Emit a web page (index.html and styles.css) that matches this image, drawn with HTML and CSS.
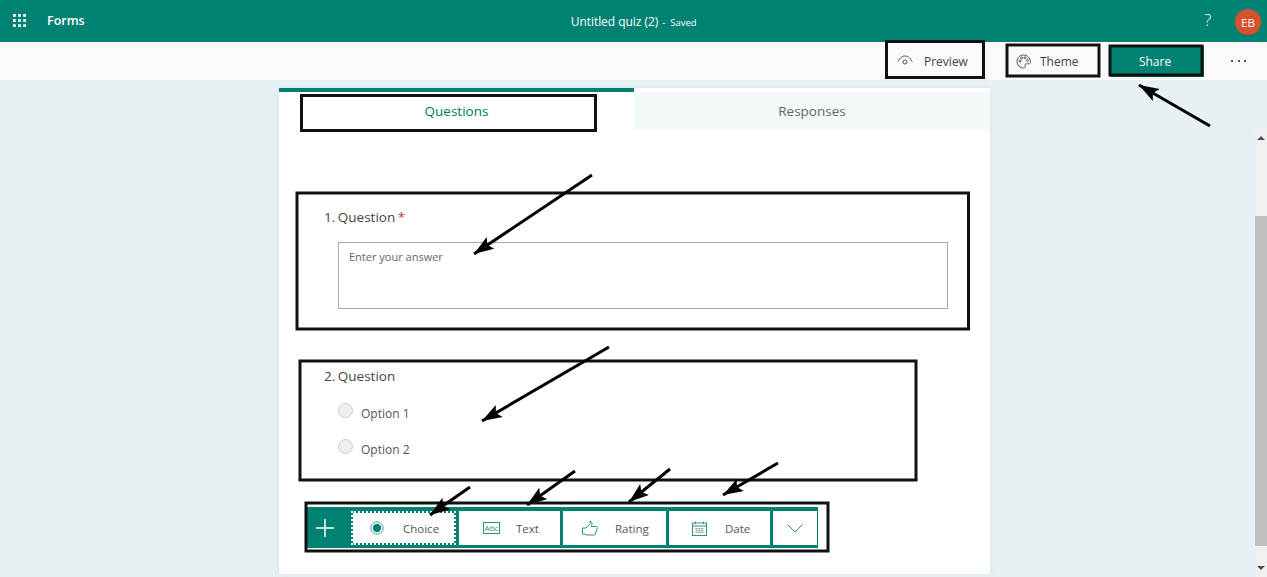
FILE: index.html
```html
<!DOCTYPE html>
<html lang="en">
<head>
  <meta charset="UTF-8" />
  <title>Untitled quiz (2) - Forms</title>
  <link rel="stylesheet" href="styles.css">
</head>
<body>
  <header class="topbar">
    <svg class="waffle" width="13" height="13" viewBox="0 0 14 14">
      <g fill="#fff">
        <rect x="0" y="0" width="3" height="3"/><rect x="5.500" y="0" width="3" height="3"/><rect x="11" y="0" width="3" height="3"/>
        <rect x="0" y="5.500" width="3" height="3"/><rect x="5.500" y="5.500" width="3" height="3"/><rect x="11" y="5.500" width="3" height="3"/>
        <rect x="0" y="11" width="3" height="3"/><rect x="5.500" y="11" width="3" height="3"/><rect x="11" y="11" width="3" height="3"/>
      </g>
    </svg>
    <span class="brand">Forms</span>
    <div class="doc-title">Untitled quiz (2)<span class="dash">-</span><span class="saved">Saved</span></div>
    <span class="help">?</span>
    <span class="avatar">EB</span>
  </header>

  <div class="actions">
    <button class="action preview">
      <svg width="16" height="12" viewBox="0 0 16 12" fill="none" stroke="#555" stroke-width="1">
        <path d="M1 6.500C3 2.500 5.500 1 8 1s5 1.500 7 5.500"/>
        <circle cx="8" cy="7" r="2"/>
      </svg>
      <span>Preview</span>
    </button>
    <button class="action theme">
      <svg width="15" height="15" viewBox="0 0 15 15" fill="none" stroke="#555" stroke-width="1">
        <path d="M7.500 1C3.500 1 1 3.800 1 7.300 1 11 4 14 7.500 14c1.500 0 2-1 1.600-2-.5-1.200.2-2.200 1.500-2.200h2.200c1 0 1.700-.8 1.700-2C14 3.800 11.500 1 7.500 1z"/>
        <circle cx="4" cy="7" r="1"/><circle cx="5.500" cy="4" r="1"/><circle cx="9" cy="3.800" r="1"/><circle cx="11.500" cy="6.500" r="1"/>
      </svg>
      <span>Theme</span>
    </button>
    <button class="share">Share</button>
    <span class="more">
      <i></i><i></i><i></i>
    </span>
  </div>

  <main class="content">
    <section class="card">
      <nav class="tabs">
        <div class="tab tab-active">Questions</div>
        <div class="tab">Responses</div>
      </nav>

      <div class="question q-text">
        <div class="q-title">1. Question <span class="req">*</span></div>
        <div class="answer">Enter your answer</div>
      </div>

      <div class="question q-choice">
        <div class="q-title">2. Question</div>
        <div class="option"><span class="radio"></span><span>Option 1</span></div>
        <div class="option"><span class="radio"></span><span>Option 2</span></div>
      </div>

      <div class="add-bar">
        <span class="plus">
          <svg width="18" height="18" viewBox="0 0 18 18" stroke="#fff" stroke-width="1.500"><path d="M9 0v18M0 9h18"/></svg>
        </span>
        <button class="add-btn add-choice">
          <svg width="14" height="14" viewBox="0 0 14 14">
            <circle cx="7" cy="7" r="6.200" fill="none" stroke="#5a9f97" stroke-width="1"/>
            <circle cx="7" cy="7" r="4.200" fill="#008272"/>
          </svg>
          <span>Choice</span>
        </button>
        <button class="add-btn add-text">
          <svg width="17" height="12" viewBox="0 0 17 12">
            <rect x=".5" y=".5" width="16" height="11" fill="none" stroke="#2e8f84"/>
            <text x="8.500" y="8.500" class="abc">Abc</text>
          </svg>
          <span>Text</span>
        </button>
        <button class="add-btn add-rating">
          <svg width="16" height="15" viewBox="0 0 16 15" fill="none" stroke="#2e8f84" stroke-width="1">
            <path d="M.5 7h3.500l4-4.500V.5c1.500 0 2 1 2 2.200L9.500 5.500h5c.8 0 1.200 1 .8 1.700l-2 5.800c-.2.600-.6 1-1.300 1H4l-1-1H.5z"/>
          </svg>
          <span>Rating</span>
        </button>
        <button class="add-btn add-date">
          <svg width="15" height="15" viewBox="0 0 15 15" fill="none" stroke="#2e8f84" stroke-width="1">
            <rect x=".5" y="2" width="14" height="12.500"/>
            <path d="M.5 5h14M3.500 .5V3M11.500 .5V3"/>
            <path d="M3 7.500h9M3 9.500h9M3 11.500h9M5 7v5M7.500 7v5M10 7v5" stroke="#8a9" stroke-width=".7"/>
          </svg>
          <span>Date</span>
        </button>
        <button class="add-more">
          <svg width="16" height="9" viewBox="0 0 16 9" fill="none" stroke="#2e8f84" stroke-width="1"><path d="M.5 .5L8 8l7.500-7.500"/></svg>
        </button>
      </div>
    </section>

    <aside class="scrollbar">
      <span class="arrow-up"></span>
      <span class="thumb"></span>
      <span class="arrow-down"></span>
    </aside>
  </main>

  <!-- black boxes and arrows drawn over the screenshot -->
  <svg class="marks" width="1267" height="577" viewBox="0 0 1267 577">
    <defs>
      <marker id="head" markerUnits="userSpaceOnUse" markerWidth="22" markerHeight="16" refX="20" refY="7" orient="auto">
        <path d="M0 0L20 7L0 14L4 7z" fill="#000"/>
      </marker>
    </defs>
    <g fill="none" stroke="#111" stroke-width="3">
      <rect x="886.500" y="41.500" width="97" height="36"/>
      <rect x="1007" y="45" width="92" height="31"/>
      <rect x="1110" y="46" width="92" height="29"/>
      <rect x="301.500" y="95.500" width="294" height="35"/>
      <rect x="297" y="193" width="671.500" height="136"/>
      <rect x="300" y="361" width="616" height="119"/>
      <rect x="306" y="503" width="522" height="48"/>
    </g>
    <g stroke="#000" stroke-width="3">
      <line x1="1210" y1="126" x2="1139" y2="85" marker-end="url(#head)"/>
      <line x1="592" y1="175" x2="474" y2="254" marker-end="url(#head)"/>
      <line x1="609" y1="347" x2="482" y2="421" marker-end="url(#head)"/>
      <line x1="470" y1="487" x2="430" y2="515" marker-end="url(#head)"/>
      <line x1="575" y1="471" x2="527" y2="505" marker-end="url(#head)"/>
      <line x1="670" y1="469" x2="629" y2="502" marker-end="url(#head)"/>
      <line x1="778" y1="463" x2="723" y2="495" marker-end="url(#head)"/>
    </g>
  </svg>
</body>
</html>
```

FILE: styles.css
```css
* {
  box-sizing: border-box;
}
html, body {
  height: 100%;
}
body {
  margin: 0;
  position: relative;
  overflow: hidden;
  background-color: #e7f0f3;
  color: #333;
  font-family: "Open Sans", "Noto Sans", sans-serif;
  font-size: 13px;
  display: flex;
  flex-direction: column;
}
button {
  font: inherit;
  border: 0;
  background: none;
  padding: 0;
  color: inherit;
}

/* top bar */
.topbar {
  height: 42px;
  flex: none;
  background-color: #008272;
  color: #fff;
  display: flex;
  align-items: center;
  padding-left: 13px;
}
.waffle {
  margin-top: -2px;
}
.brand {
  margin-left: 21px;
  margin-top: -2px;
  font-size: 12.500px;
  font-weight: 600;
}
.doc-title {
  margin-left: 486px;
  font-size: 12px;
  letter-spacing: -.05px;
}
.dash {
  margin: 0 5px 0 4px;
  font-size: 10px;
}
.saved {
  font-size: 9.500px;
}
.help {
  margin-left: 508px;
  margin-top: -3px;
  font-size: 16px;
  font-weight: 300;
}
.avatar {
  width: 26px;
  height: 26px;
  margin-left: auto;
  margin-right: 6px;
  margin-top: 2px;
  border-radius: 50%;
  background-color: #d9512c;
  font-size: 11.500px;
  display: flex;
  align-items: center;
  justify-content: center;
}

/* action row */
.actions {
  height: 38px;
  flex: none;
  background-color: #fafafa;
  display: flex;
  align-items: center;
  justify-content: flex-end;
  padding-right: 21px;
  font-size: 12px;
  color: #444;
}
.action {
  display: flex;
  align-items: center;
  height: 32px;
}
.preview {
  width: 98px;
  padding-left: 10px;
  gap: 11px;
}
.theme {
  width: 94px;
  margin-left: 22px;
  padding-left: 9px;
  gap: 9px;
}
.share {
  width: 94px;
  height: 31px;
  margin-left: 9px;
  padding-right: 4px;
  background-color: #008272;
  color: #fff;
}
.more {
  margin-left: 27px;
  width: 15px;
  display: flex;
  justify-content: space-between;
}
.more i {
  width: 2px;
  height: 2px;
  background-color: #555;
}

/* page body */
.content {
  flex: 1;
  display: flex;
  min-height: 0;
}
.card {
  width: 711px;
  height: 486px;
  margin-left: 279px;
  margin-top: 8px;
  background-color: #fff;
  box-shadow: 0 0 6px rgba(0, 0, 0, .06);
  font-size: 13.500px;
}
.tabs {
  display: flex;
  height: 42px;
}
.tab {
  width: 356px;
  height: 38px;
  margin-top: 4px;
  background-color: #f3f8f8;
  color: #666;
  display: flex;
  align-items: center;
  justify-content: center;
}
.tab-active {
  width: 355px;
  height: 42px;
  margin-top: 0;
  padding-bottom: 1px;
  background-color: #fff;
  border-top: 4px solid #008272;
  color: #00786a;
}

.question {
  padding-left: 45px;
}
.q-text {
  margin-top: 77px;
}
.q-title {
  line-height: 20px;
  color: #444;
  word-spacing: -1px;
}
.req {
  color: #c9402a;
}
.answer {
  width: 610px;
  height: 67px;
  margin: 15px 0 0 14px;
  padding: 6px 10px;
  border: 1px solid #aaa;
  font-size: 11px;
  color: #666;
}
.q-choice {
  margin-top: 57px;
}
.option {
  display: flex;
  align-items: center;
  gap: 8px;
  height: 20px;
  margin-left: 14px;
  margin-top: 16px;
  font-size: 12px;
  color: #555;
}
.q-choice .q-title + .option {
  margin-top: 17px;
}
.radio {
  width: 15px;
  height: 15px;
  margin-top: -5px;
  border-radius: 50%;
  background-color: #eee;
  border: 1px solid #ccc;
}

/* add new question */
.add-bar {
  width: 511px;
  height: 41px;
  margin: 48px 0 0 28px;
  padding: 4px 1px 3px 0;
  background-color: #008272;
  display: flex;
  gap: 3px;
  font-size: 11.500px;
  color: #555;
}
.plus {
  width: 44px;
  margin-right: -3px;
  padding-left: 9px;
  display: flex;
  align-items: center;
}
.add-btn {
  background-color: #fff;
  display: flex;
  align-items: center;
}
.add-choice {
  width: 105px;
  padding-left: 17px;
  gap: 19px;
  border: 2px dotted #fff;
  background-clip: padding-box;
}
.add-text {
  width: 101px;
  padding-left: 24px;
  gap: 16px;
}
.add-rating {
  width: 103px;
  padding-left: 19px;
  gap: 17px;
}
.add-date {
  width: 101px;
  padding-left: 23px;
  gap: 18px;
}
.add-more {
  width: 44px;
  background-color: #fff;
  display: flex;
  align-items: center;
  justify-content: center;
}
.abc {
  font-size: 8px;
  fill: #2e8f84;
  text-anchor: middle;
}

/* scrollbar */
.scrollbar {
  width: 13px;
  margin: 50px 0 0 264px;
  background-color: #f0f0f0;
  display: flex;
  flex-direction: column;
  align-items: center;
}
.arrow-up {
  margin-top: 6px;
  border: 4px solid transparent;
  border-top: 0;
  border-bottom: 4px solid #505050;
}
.thumb {
  width: 12px;
  height: 330px;
  margin-top: 76px;
  background-color: #c0c0c0;
}
.arrow-down {
  margin-top: 20px;
  border: 4px solid transparent;
  border-bottom: 0;
  border-top: 4px solid #505050;
}

.marks {
  position: absolute;
  left: 0;
  top: 0;
  pointer-events: none;
}
```
